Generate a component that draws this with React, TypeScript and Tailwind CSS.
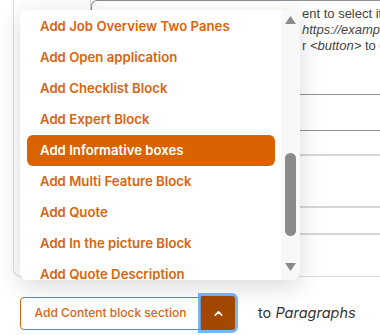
import { ChevronUp } from 'lucide-react';

const items = [
  'Add Job Overview Two Panes',
  'Add Open application',
  'Add Checklist Block',
  'Add Expert Block',
  'Add Informative boxes',
  'Add Multi Feature Block',
  'Add Quote',
  'Add In the picture Block',
  'Add Quote Description',
];

const ACTIVE = 4;

const Triangle = ({ down }: { down?: boolean }) => (
  <svg width="11" height="8" viewBox="0 0 11 8" className="block mx-auto">
    {down ? (
      <polygon points="0,0 11,0 5.5,8" fill="#8a8a8a" />
    ) : (
      <polygon points="0,8 11,8 5.5,0" fill="#8a8a8a" />
    )}
  </svg>
);

const App = () => {
  return (
    <div
      className="relative w-[380px] h-[335px] overflow-hidden bg-white"
      style={{ fontFamily: 'Inter, "Noto Sans", sans-serif' }}
    >
      {/* Editor panel behind the menu */}
      <div className="ml-[13px] h-[277px] border-l border-b border-[#dcdce0] rounded-bl-lg flex">
        <div className="w-[77px] shrink-0">
          <div className="ml-[50px] h-[12px] border-r border-[#d0d0d4]" />
        </div>
        <div className="flex-1 flex flex-col overflow-hidden">
          <div className="h-[96px] border-t border-l border-b border-[#8f8f9a] rounded-tl-md pl-[210px] pt-[5px] text-[13px] leading-[16px] text-[#444444] whitespace-nowrap font-['Liberation_Sans',Arial,sans-serif]">
            <div>ent to select it</div>
            <div>
              <span className="italic">https://example.com</span>
            </div>
            <div>
              r <span className="italic">&lt;button&gt;</span> to open
            </div>
          </div>
          <div className="h-[35px]" />
          <div className="h-[25px] border-t border-[#8f8f9a]" />
          <div className="h-[52px] border-t-2 border-[#d6d6da]" />
          <div className="h-[27px] border-t-2 border-[#d6d6da]" />
          <div className="h-[44px] border-t-2 border-[#d6d6da]" />
        </div>
      </div>

      {/* Dropdown menu */}
      <div className="absolute left-[20px] top-[10px] w-[280px] h-[270px] bg-white rounded-lg shadow-[0_6px_24px_rgba(40,40,70,0.18)] overflow-hidden flex">
        <ul className="flex-1 pl-[7px] pr-[6px] pt-[1px]">
          {items.map((item, i) => (
            <li
              key={i}
              className={
                i === ACTIVE
                  ? 'h-[31px] flex items-center pl-[13px] rounded-md bg-[#d86300] text-white text-[13.2px] font-semibold whitespace-nowrap'
                  : 'h-[31px] flex items-center pl-[13px] text-[#d9650d] text-[13.2px] font-semibold whitespace-nowrap'
              }
            >
              {item}
            </li>
          ))}
        </ul>
        <div className="w-[19px] shrink-0 bg-[#f8f8f8] pt-[6px]">
          <Triangle />
          <div className="mt-[129px] mx-auto w-[11px] h-[83px] rounded-full bg-[#8a8a8a]" />
          <div className="mt-[27px]">
            <Triangle down />
          </div>
        </div>
      </div>

      {/* Add section controls */}
      <div className="mt-[19px] ml-[20px] flex items-center">
        <button className="h-[33px] w-[181px] border border-[#d9650d] rounded-l-[4px] text-[12px] font-medium text-[#d9650d]">
          Add Content block section
        </button>
        <button className="h-[34px] w-[34px] flex items-center justify-center bg-[#a34800] rounded-r-[3px] ring-[3px] ring-[#5aa2f2]/80">
          <ChevronUp size={13} strokeWidth={3} color="#ffffff" />
        </button>
        <span className="ml-[23px] text-[14.5px] text-[#333333]">
          to <span className="italic">Paragraphs</span>
        </span>
      </div>
    </div>
  );
};

export default App;
